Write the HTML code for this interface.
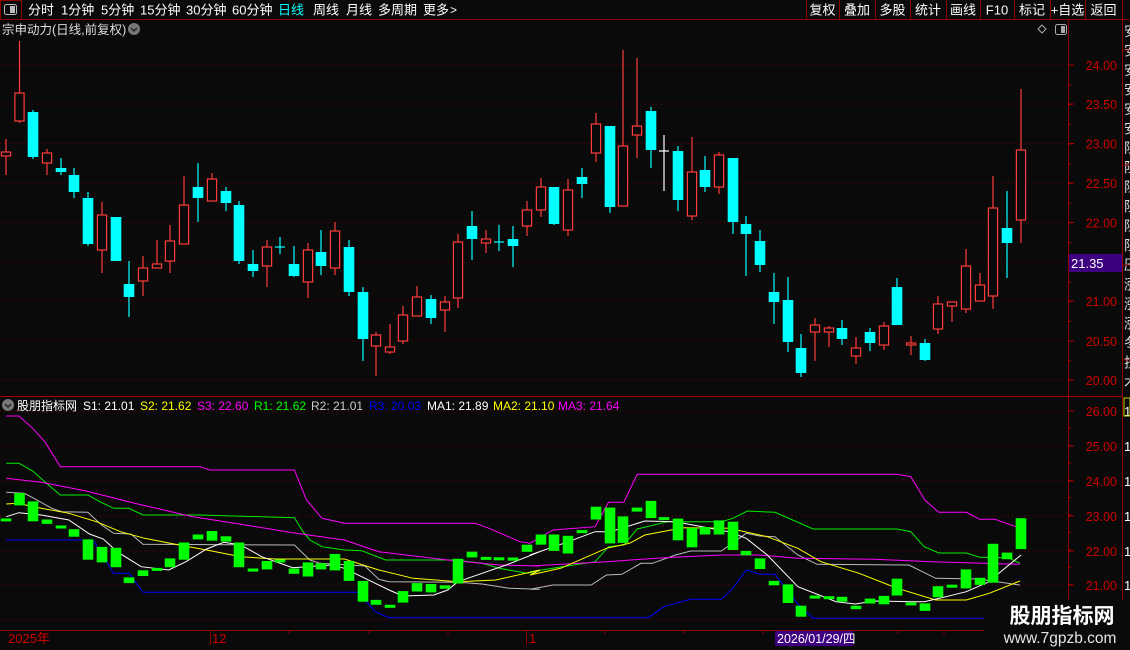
<!DOCTYPE html>
<html><head><meta charset="utf-8">
<style>
html,body{margin:0;padding:0;background:#0a0a0a;width:1130px;height:650px;overflow:hidden;font-family:"Liberation Sans","Noto Sans CJK SC",sans-serif;}
#wrap{position:relative;width:1130px;height:650px;}
svg{position:absolute;left:0;top:0;}
</style></head><body><div id="wrap">
<svg id="s" width="1130" height="650" xmlns="http://www.w3.org/2000/svg" font-family="Liberation Sans, Noto Sans CJK SC, sans-serif"></svg>
</div>
<script>
const S=document.getElementById('s');
let h='';
const R='#8c0000';
h+=`<rect x="0" y="0" width="1130" height="20" fill="#0a0a0a"/>`;
h+=`<line x1="0" y1="19.5" x2="1130" y2="19.5" stroke="${R}"/>`;
h+=`<rect x="0.5" y="0.5" width="21" height="19" fill="none" stroke="${R}"/>`;
h+=`<rect x="4.5" y="4.5" width="12" height="10" rx="2" fill="none" stroke="#bbb"/><rect x="10" y="6" width="5" height="7" fill="#bbb"/>`;
const tb=[['分时',28],['1分钟',61],['5分钟',101],['15分钟',140],['30分钟',186],['60分钟',232],['日线',278,'#00ffff'],['周线',313],['月线',346],['多周期',378],['更多',423]];
tb.forEach(t=>h+=`<text x="${t[1]}" y="14.5" font-size="13" fill="${t[2]||'#fff'}">${t[0]}</text>`);
h+=`<text x="450" y="14" font-size="12" fill="#fff">&gt;</text>`;
const bt=[['复权',806,839],['叠加',839,875],['多股',875,910],['统计',910,946],['画线',946,980],['F10',980,1014],['标记',1014,1050],['+自选',1050,1085],['返回',1085,1122]];
bt.forEach(b=>{h+=`<line x1="${b[1]+.5}" y1="0" x2="${b[1]+.5}" y2="19" stroke="${R}"/><text x="${(b[1]+b[2])/2}" y="14.5" font-size="13" fill="#fff" text-anchor="middle">${b[0]}</text>`});
h+=`<line x1="1122.5" y1="0" x2="1122.5" y2="19" stroke="${R}"/>`;
h+=`<text x="2" y="34" font-size="12.5" fill="#ddd">宗申动力(日线,前复权)</text>`;
h+=`<circle cx="134" cy="29" r="6" fill="#777"/><path d="M131 28 L134 31 L137 28" stroke="#222" stroke-width="1.5" fill="none"/>`;
h+=`<path d="M1042 25 L1046 29 L1042 33 L1038 29 Z" fill="none" stroke="#aaa"/>`;
h+=`<rect x="1055.5" y="24.5" width="11" height="10" rx="2" fill="none" stroke="#aaa"/><rect x="1061" y="26" width="4" height="7" fill="#aaa"/>`;
h+=`<line x1="1068.5" y1="20" x2="1068.5" y2="650" stroke="${R}"/>`;
h+=`<line x1="1122.5" y1="20" x2="1122.5" y2="650" stroke="${R}"/>`;
h+=`<line x1="0" y1="396.5" x2="1122" y2="396.5" stroke="#b00000"/>`;
h+=`<line x1="0" y1="630.5" x2="1068" y2="630.5" stroke="${R}"/>`;
[[24,65],[23.5,104],[23,143.5],[22.5,183],[22,222.5],[21.5,262],[21,301],[20.5,341],[20,380]].forEach(g=>{
 h+=`<line x1="0" y1="${g[1]}" x2="1064" y2="${g[1]}" stroke="#6a0000" stroke-dasharray="1 3"/>`;
 h+=`<line x1="1068" y1="${g[1]}" x2="1074" y2="${g[1]}" stroke="#b00000"/>`;
 if(g[1]!=262) h+=`<text x="1117" y="${g[1]+5}" font-size="12.5" fill="#d00000" text-anchor="end">${g[0].toFixed(2)}</text>`;
});
for(let y=85;y<395;y+=19.7) h+=`<line x1="1068" y1="${y}" x2="1071" y2="${y}" stroke="#b00000"/>`;
h+=`<rect x="1069" y="254" width="53" height="18" fill="#3d0080"/><text x="1071" y="268" font-size="13" fill="#fff">21.35</text>`;
const vs='安安安安安安阻阻阻阻阻阻压涨涨涨冬技术';
for(let i=0;i<19;i++) h+=`<text x="1124" y="${36+i*19.5}" font-size="14" fill="#ddd">${vs[i]}</text>`;
[50,165,265,360].forEach(y=>h+=`<line x1="1122" y1="${y}" x2="1130" y2="${y}" stroke="${R}"/>`);
const C=[
[6,152,156,139,175,'r'],[19.5,93,121,41,123,'r'],[33,112,157,110,159,'c'],[47,153,163,149,175,'r'],[61,168,172,158,175,'c'],
[74,175,192,168,198,'c'],[88,198,244,192,246,'c'],[102,215,250,202,273,'r'],[116,217,261,217,261,'c'],[129,284,297,261,317,'c'],
[143,268,281,256,296,'r'],[157,264,268,240,268,'r'],[170,241,261,225,273,'r'],[184,205,244,176,244,'r'],[198,187,198,163,222,'c'],
[212,179,201,173,201,'r'],[226,191,203,187,211,'c'],[239,205,261,201,264,'c'],[253,264,271,250,277,'c'],[267,247,266,240,287,'r'],
[280,247,247,237,254,'c'],[294,264,276,246,277,'c'],[308,250,282,243,298,'r'],[321,252,266,230,275,'c'],[335,231,268,222,275,'r'],
[349,247,292,240,296,'c'],[363,292,339,287,361,'c'],[376,335,346,332,376,'r'],[390,347,352,324,354,'r'],[403,315,341,306,344,'r'],
[417,297,316,286,316,'r'],[431,299,318,295,324,'c'],[445,302,310,296,332,'r'],[458,242,298,234,308,'r'],[472,226,239,211,260,'c'],
[486,239,243,230,253,'r'],[499,242,242,225,251,'c'],[513,239,246,226,267,'c'],[527,210,226,201,236,'r'],[541,187,210,178,217,'r'],
[554,187,224,187,225,'c'],[568,190,230,179,236,'r'],[582,177,184,168,198,'c'],[596,124,153,113,162,'r'],[610,126,207,126,213,'c'],
[623,146,206,50,206,'r'],[637,126,135,58,158,'r'],[651,111,150,107,168,'c'],[664,151,151,135,191,'w'],[678,151,200,146,211,'c'],
[692,172,216,137,220,'r'],[705,170,187,156,192,'c'],[719,155,187,152,194,'r'],[733,158,222,158,234,'c'],[746,224,234,216,276,'c'],
[760,241,265,230,272,'c'],[774,292,302,273,324,'c'],[788,300,342,277,352,'c'],[801,348,373,334,377,'c'],[815,325,332,318,361,'r'],
[829,328,332,326,347,'r'],[842,328,339,320,345,'c'],[856,348,356,337,364,'r'],[870,332,343,328,351,'c'],[884,326,345,322,350,'r'],
[897,287,325,278,325,'c'],[911,343,345,336,355,'r'],[925,343,360,339,361,'c'],[938,304,329,296,334,'r'],[952,302,306,302,322,'r'],
[966,266,309,249,313,'r'],[980,285,301,273,301,'r'],[993,208,296,176,309,'r'],[1007,228,243,191,278,'c'],[1021,150,220,89,243,'r']];
const col={r:'#ff3b3b',c:'#00ffff',w:'#ffffff'};
const iy=y=>{const p=20+(380-y)/78.75;return 585-(p-21)*34.8;};
C.forEach(c=>{const [x,t,b,wt,wb,k]=c;const cl=col[k];
 h+=`<line x1="${x}" y1="${wt}" x2="${x}" y2="${wb}" stroke="${cl}" stroke-width="1.2"/>`;
 if(b-t<1.5){h+=`<line x1="${x-5}" y1="${t}" x2="${x+5}" y2="${t}" stroke="${cl}" stroke-width="1.2"/>`;}
 else if(k=='r'){h+=`<rect x="${x-4.6}" y="${t}" width="9.2" height="${b-t}" fill="#0a0a0a" stroke="${cl}" stroke-width="1.2"/>`;}
 else h+=`<rect x="${x-5.3}" y="${t}" width="10.6" height="${b-t}" fill="${cl}"/>`;
 let a=iy(t),bb=iy(b);if(bb-a<3){const m=(a+bb)/2;a=m-1.5;bb=m+1.5;}
 c.push([a,bb]);
});
h+=`<circle cx="8" cy="405" r="6" fill="#777"/><path d="M5 404 L8 407 L11 404" stroke="#222" stroke-width="1.5" fill="none"/>`;
const hd=[['股朋指标网','#fff',17],['S1: 21.01','#fff',83],['S2: 21.62','#ffff00',140],['S3: 22.60','#ff00ff',197],['R1: 21.62','#00ff00',254],['R2: 21.01','#ccc',311],['R3: 20.03','#0000ff',369],['MA1: 21.89','#fff',427],['MA2: 21.10','#ffff00',493],['MA3: 21.64','#ff00ff',558]];
hd.forEach(d=>h+=`<text x="${d[2]}" y="410" font-size="12" fill="${d[1]}">${d[0]}</text>`);
[[26,411],[25,446],[24,481],[23,516],[22,551],[21,585]].forEach(g=>{
 h+=`<line x1="0" y1="${g[1]}" x2="1064" y2="${g[1]}" stroke="#6a0000" stroke-dasharray="1 3"/>`;
 h+=`<line x1="1068" y1="${g[1]}" x2="1074" y2="${g[1]}" stroke="#b00000"/>`;
 h+=`<text x="1117" y="${g[1]+5}" font-size="12.5" fill="#d00000" text-anchor="end">${g[0].toFixed(2)}</text>`;
 h+=`<text x="1124" y="${g[1]+5}" font-size="13" fill="#fff">1</text>`;
});
for(let y=428;y<620;y+=17.4) h+=`<line x1="1068" y1="${y}" x2="1071" y2="${y}" stroke="#b00000"/>`;
h+=`<line x1="0" y1="619.5" x2="1064" y2="619.5" stroke="#6a0000" stroke-dasharray="1 3"/>`;
h+=`<rect x="1124" y="398" width="6" height="18" fill="none" stroke="#cc0"/>`;
const L9=(a)=>a.map(p=>[p[0]/2.904,405+p[1]/3]);
const L10=(a)=>a.map(p=>[530+p[0]/2.613,405+p[1]/3]);
const lines=[
['#ff00ff',L9([[18,33],[55,33],[95,70],[130,110],[175,185],[580,185],[610,195],[855,195],[890,285],[935,340],[1000,355],[1380,355],[1420,370],[1510,410],[1540,415]]).concat(L10([[0,415],[60,375],[170,365],[205,292],[245,292],[280,208],[960,208],[995,215],[1032,285],[1068,322],[1140,322],[1175,343],[1215,343],[1270,365]]))],
['#00ee00',L9([[18,175],[55,175],[95,198],[130,230],[175,270],[255,270],[290,290],[330,310],[375,310],[415,330],[580,330],[855,338],[880,380],[900,405],[935,425],[1000,435],[1050,437],[1120,465],[1320,465],[1400,475],[1450,490],[1530,505],[1568,497]]).concat(L10([[0,500],[170,470],[205,425],[245,420],[280,372],[360,350],[500,350],[530,340],[568,318],[640,322],[740,372],[960,372],[995,380],[1030,425],[1068,444],[1140,444],[1175,457],[1250,458],[1280,475]]))],
['#bbbbbb',L9([[18,262],[70,265],[95,278],[150,310],[180,320],[255,322],[295,360],[330,385],[380,387],[415,418],[855,420],[900,465],[930,475],[1060,483],[1100,523],[1130,530],[1330,532],[1400,537],[1480,550],[1568,553]]).concat(L10([[0,553],[60,540],[160,540],[200,510],[240,508],[290,475],[320,475],[380,450],[420,438],[500,438],[565,385],[600,393],[640,395],[700,450],[750,478],[990,480],[1060,520],[1170,522],[1280,540]]))],
['#ff00ff',L9([[18,220],[120,232],[250,258],[400,297],[560,335],[700,358],[850,383],[1000,405],[1100,440],[1300,465],[1450,480],[1568,483]]).concat(L10([[0,483],[200,470],[350,458],[500,450],[600,450],[700,460],[900,463],[1050,470],[1280,478]]))],
['#ffff00',L9([[18,297],[50,295],[120,310],[200,325],[280,350],[350,380],[420,400],[520,420],[600,435],[700,455],[800,462],[1000,462],[1100,495],[1200,520],[1330,530],[1440,525],[1568,495]]).concat(L10([[0,510],[80,490],[200,430],[260,415],[300,390],[400,368],[520,370],[620,395],[700,430],[760,470],[860,505],[960,550],[1060,585],[1140,585],[1200,565],[1280,528]]))],
['#ffffff',L9([[18,335],[55,323],[120,330],[200,345],[260,387],[300,402],[340,440],[410,485],[490,495],[540,470],[600,432],[650,412],[700,420],[760,455],[850,488],[960,480],[1000,490],[1060,520],[1130,555],[1170,573],[1260,570],[1300,555],[1330,530],[1400,505],[1470,480],[1568,440]]).concat(L10([[0,450],[100,410],[170,380],[210,380],[300,348],[380,350],[520,380],[565,400],[620,450],[700,545],[800,590],[850,597],[900,588],[1000,590],[1030,590],[1070,580],[1140,560],[1200,530],[1230,500],[1283,450]]))],
['#0000ff',L9([[18,405],[270,405],[330,505],[375,505],[415,562],[1040,562],[1090,620],[1130,638],[1568,638]]).concat(L10([[0,638],[310,638],[350,605],[420,583],[500,583],[530,550],[565,495],[600,508],[640,508],[700,598],[740,640],[1190,640]]))]
];
lines.forEach(l=>h+=`<polyline points="${l[1].map(p=>p[0].toFixed(1)+','+p[1].toFixed(1)).join(' ')}" fill="none" stroke="${l[0]}" stroke-width="1"/>`);
C.forEach(c=>{const b=c[6];h+=`<rect x="${c[0]-5.3}" y="${b[0].toFixed(1)}" width="10.6" height="${(b[1]-b[0]).toFixed(1)}" fill="#00ff00"/>`;});
h+=`<text x="8" y="643" font-size="13" fill="#d00000">2025年</text>`;
h+=`<line x1="210.5" y1="630" x2="210.5" y2="645" stroke="${R}"/><text x="212" y="643" font-size="13" fill="#d00000">12</text>`;
h+=`<line x1="526.5" y1="630" x2="526.5" y2="645" stroke="${R}"/><text x="529" y="643" font-size="13" fill="#d00000">1</text>`;
[289,369,448,605,684,763,898,944].forEach(x=>h+=`<line x1="${x}" y1="630" x2="${x}" y2="634" stroke="${R}"/>`);
h+=`<rect x="775" y="631" width="78" height="15" fill="#3d0080"/><text x="777" y="643" font-size="12.5" fill="#fff">2026/01/29/四</text>`;
h+=`<rect x="984" y="600" width="146" height="50" fill="#0a0a0a"/>`;
h+=`<text x="1062" y="623" font-size="21" font-weight="bold" fill="#fff" text-anchor="middle">股朋指标网</text>`;
h+=`<text x="1060" y="643" font-size="15.5" fill="#e6e6e6" text-anchor="middle">www.7gpzb.com</text>`;
S.innerHTML=h;
</script>
</body></html>
